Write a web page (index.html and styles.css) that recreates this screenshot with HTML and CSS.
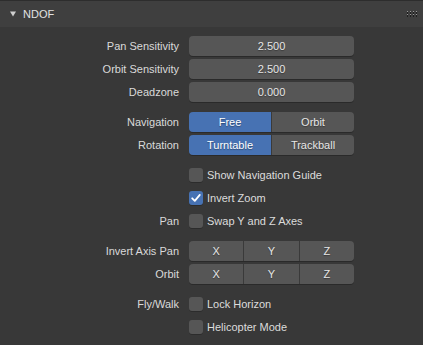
FILE: index.html
```html
<!DOCTYPE html>
<html lang="en">
  <head>
    <meta charset="UTF-8" />
    <title>NDOF</title>
    <link rel="stylesheet" href="styles.css">
  </head>
  <body>
    <div class="panel">
      <div class="panel-header">
        <svg class="arrow" width="8" height="6" viewBox="0 0 8 6"><polygon points="1,0.5 7,0.5 4,5.5" fill="#cfcfcf"/></svg>
        <span class="title">NDOF</span>
        <svg class="grip" width="12" height="6" viewBox="0 0 12 6">
          <g fill="#1e1e1e">
            <rect x="1" y="1" width="1" height="2"/><rect x="4" y="1" width="1" height="2"/><rect x="7" y="1" width="1" height="2"/><rect x="10" y="1" width="1" height="2"/>
            <rect x="1" y="4" width="1" height="2"/><rect x="4" y="4" width="1" height="2"/><rect x="7" y="4" width="1" height="2"/><rect x="10" y="4" width="1" height="2"/>
          </g>
          <g fill="#9a9a9a">
            <rect x="1" y="0" width="1" height="1"/><rect x="4" y="0" width="1" height="1"/><rect x="7" y="0" width="1" height="1"/><rect x="10" y="0" width="1" height="1"/>
            <rect x="1" y="3" width="1" height="1"/><rect x="4" y="3" width="1" height="1"/><rect x="7" y="3" width="1" height="1"/><rect x="10" y="3" width="1" height="1"/>
          </g>
        </svg>
      </div>
      <div class="panel-body">
        <div class="group">
          <div class="row"><span class="label">Pan Sensitivity</span><div class="field">2.500</div></div>
          <div class="row"><span class="label">Orbit Sensitivity</span><div class="field">2.500</div></div>
          <div class="row"><span class="label">Deadzone</span><div class="field">0.000</div></div>
        </div>
        <div class="group">
          <div class="row"><span class="label">Navigation</span>
            <div class="seg"><span class="on">Free</span><span>Orbit</span></div>
          </div>
          <div class="row"><span class="label">Rotation</span>
            <div class="seg"><span class="on">Turntable</span><span>Trackball</span></div>
          </div>
        </div>
        <div class="group">
          <div class="row"><span class="label"></span><label class="check"><span class="box"></span>Show Navigation Guide</label></div>
          <div class="row"><span class="label"></span><label class="check"><span class="box checked"><svg width="14" height="14" viewBox="0 0 14 14"><path d="M3.2 7.3 L5.8 9.9 L10.8 3.9" fill="none" stroke="#fff" stroke-width="1.8" stroke-linecap="round" stroke-linejoin="round"/></svg></span>Invert Zoom</label></div>
          <div class="row"><span class="label">Pan</span><label class="check"><span class="box"></span>Swap Y and Z Axes</label></div>
        </div>
        <div class="group">
          <div class="row"><span class="label">Invert Axis Pan</span>
            <div class="seg"><span>X</span><span>Y</span><span>Z</span></div>
          </div>
          <div class="row"><span class="label">Orbit</span>
            <div class="seg"><span>X</span><span>Y</span><span>Z</span></div>
          </div>
        </div>
        <div class="group">
          <div class="row"><span class="label">Fly/Walk</span><label class="check"><span class="box"></span>Lock Horizon</label></div>
          <div class="row"><span class="label"></span><label class="check"><span class="box"></span>Helicopter Mode</label></div>
        </div>
      </div>
    </div>
  </body>
</html>
```
FILE: styles.css
```css
body {
  margin: 0;
  background-color: #383838;
  font-family: "Liberation Sans", Arial, sans-serif;
  font-size: 11px;
  color: #dcdcdc;
}
.panel {
  width: 423px;
  height: 345px;
  border-top: 1px solid #2d2d2d;
  box-sizing: border-box;
}
.panel-header {
  display: flex;
  align-items: center;
  height: 26px;
  background-color: #3f3f3f;
  padding: 0 5px 0 9px;
}
.arrow {
  margin-top: -1px;
}
.title {
  margin-left: 6px;
  color: #e2e2e2;
  flex: 1;
}
.grip {
  margin-right: 0;
}
.panel-body {
  padding-top: 8px;
  display: flex;
  flex-direction: column;
  gap: 9px;
}
.group {
  display: flex;
  flex-direction: column;
  gap: 2px;
}
.row {
  display: grid;
  grid-template-columns: 179px 165px;
  column-gap: 10px;
  height: 21px;
  align-items: center;
}
.label {
  text-align: right;
  color: #dadada;
}
.field {
  height: 20px;
  line-height: 20px;
  background-color: #565656;
  border-radius: 4px;
  text-align: center;
  color: #e6e6e6;
  box-shadow: 0 1px 0 rgba(0, 0, 0, 0.25);
  text-shadow: 0 1px 1px rgba(0, 0, 0, 0.35);
}
.seg {
  display: flex;
  height: 20px;
  gap: 1px;
  border-radius: 4px;
  overflow: hidden;
  background-color: #3a3a3a;
  box-shadow: 0 1px 0 rgba(0, 0, 0, 0.25);
}
.seg span {
  flex: 1;
  line-height: 20px;
  text-align: center;
  background-color: #565656;
  color: #e6e6e6;
  text-shadow: 0 1px 1px rgba(0, 0, 0, 0.35);
}
.seg span.on {
  background-color: #4772b3;
  color: #ffffff;
}
.check {
  display: flex;
  align-items: center;
  gap: 4px;
  color: #dcdcdc;
}
.box {
  width: 14px;
  height: 14px;
  border-radius: 3px;
  background-color: #565656;
  box-shadow: 0 1px 0 rgba(0, 0, 0, 0.2);
}
.box.checked {
  background-color: #4772b3;
}
.box svg {
  display: block;
}
```
